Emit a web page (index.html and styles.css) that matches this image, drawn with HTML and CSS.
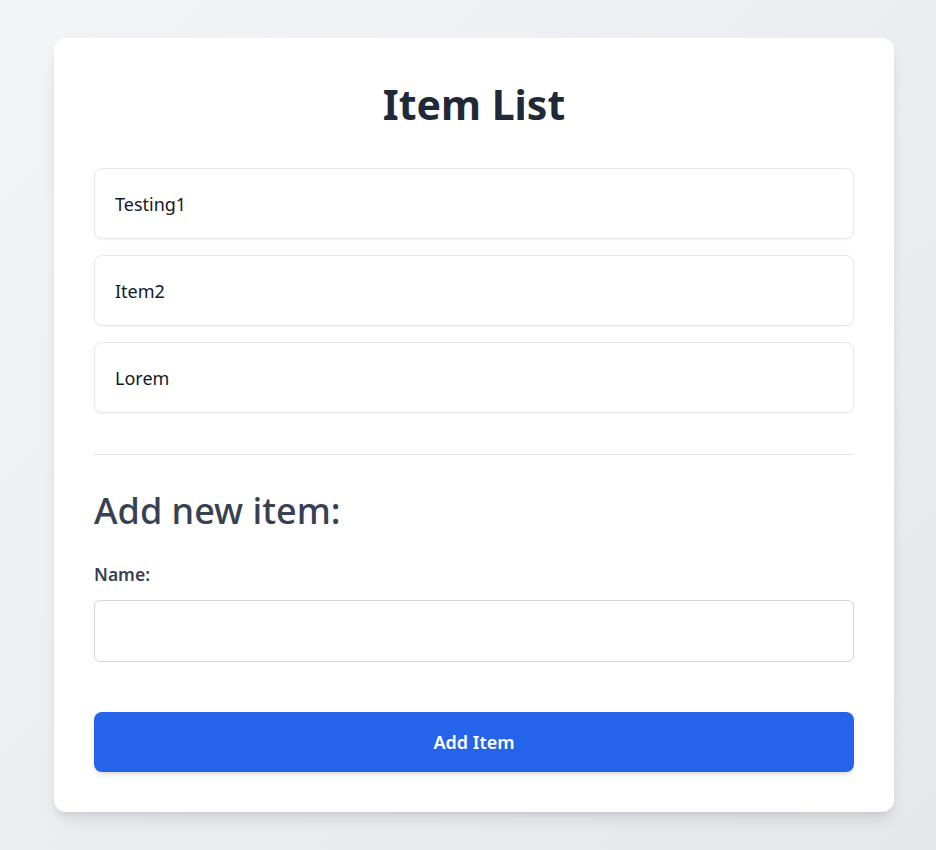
FILE: index.html
```html
<!DOCTYPE html>
<html lang="en">
<head>
<meta charset="utf-8">
<title>Item List</title>
<link rel="stylesheet" href="styles.css">
</head>
<body>
<main class="page">
  <section class="card">
    <h1 class="title">Item List</h1>
    <ul class="items">
      <li class="item">Testing1</li>
      <li class="item">Item2</li>
      <li class="item">Lorem</li>
    </ul>
    <hr class="divider">
    <h2 class="subtitle">Add new item:</h2>
    <form class="form">
      <label class="label" for="name">Name:</label>
      <input class="input" id="name" type="text">
      <button class="button" type="button">Add Item</button>
    </form>
  </section>
</main>
</body>
</html>
```
FILE: styles.css
```css
* { box-sizing: border-box; }
html, body { margin: 0; padding: 0; }
body {
  font-family: "Noto Sans", "Open Sans", sans-serif;
  background: linear-gradient(135deg, #f3f4f6 0%, #e5e7eb 100%);
  min-height: 850px;
}
.page {
  padding: 38px 42px 39px 54px;
}
.card {
  width: 840px;
  background: #ffffff;
  border-radius: 12px;
  box-shadow: 0 10px 15px -3px rgba(0,0,0,0.1), 0 4px 6px -4px rgba(0,0,0,0.1);
  padding: 40px;
}
.title {
  margin: 0 0 38px;
  text-align: center;
  font-size: 41px;
  line-height: 52px;
  font-weight: 700;
  color: #1f2937;
}
.items {
  list-style: none;
  margin: 0;
  padding: 0;
  display: flex;
  flex-direction: column;
  gap: 16px;
}
.item {
  border: 1px solid #e5e7eb;
  border-radius: 8px;
  padding: 21px 20px 19px;
  font-size: 18px;
  line-height: 29px;
  color: #111827;
  box-shadow: 0 1px 2px rgba(0,0,0,0.05);
}
.divider {
  border: 0;
  border-top: 1px solid #e5e7eb;
  margin: 41px 0 34px;
}
.subtitle {
  margin: 0 0 28px;
  font-size: 36px;
  line-height: 44px;
  font-weight: 500;
  color: #374151;
}
.form {
  display: flex;
  flex-direction: column;
}
.label {
  font-size: 17.5px;
  line-height: 26px;
  font-weight: 600;
  color: #374151;
  margin-bottom: 13px;
}
.input {
  height: 62px;
  border: 1px solid #d1d5db;
  border-radius: 6px;
  padding: 0 16px;
  font: inherit;
  font-size: 18px;
  margin-bottom: 50px;
}
.button {
  height: 60px;
  border: 0;
  border-radius: 8px;
  background: #2563eb;
  color: #ffffff;
  font: inherit;
  font-size: 18px;
  font-weight: 600;
  box-shadow: 0 4px 6px -1px rgba(0,0,0,0.1), 0 2px 4px -2px rgba(0,0,0,0.1);
}
```
